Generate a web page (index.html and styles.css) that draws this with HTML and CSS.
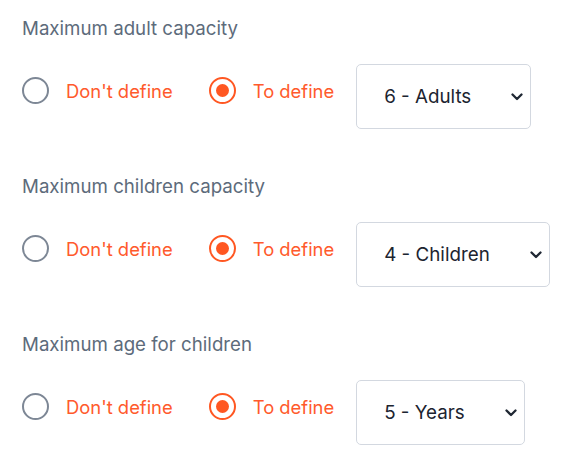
FILE: index.html
```html
<!DOCTYPE html>
<html>
<head>
<meta charset="utf-8">
<link rel="stylesheet" href="styles.css">
</head>
<body>
<div class="form">
  <div class="field">
    <div class="field-label">Maximum adult capacity</div>
    <div class="row">
      <label class="opt"><span class="radio"></span><span class="opt-text">Don't define</span></label>
      <label class="opt"><span class="radio checked"></span><span class="opt-text">To define</span></label>
      <div class="select"><span class="select-value">6 - Adults</span><svg class="chev" width="12" height="8" viewBox="0 0 12 8"><path d="M1.5 1.5 L6 6 L10.5 1.5" fill="none" stroke="#1f2733" stroke-width="2.3" stroke-linecap="round" stroke-linejoin="round"/></svg></div>
    </div>
  </div>
  <div class="field">
    <div class="field-label">Maximum children capacity</div>
    <div class="row">
      <label class="opt"><span class="radio"></span><span class="opt-text">Don't define</span></label>
      <label class="opt"><span class="radio checked"></span><span class="opt-text">To define</span></label>
      <div class="select"><span class="select-value">4 - Children</span><svg class="chev" width="12" height="8" viewBox="0 0 12 8"><path d="M1.5 1.5 L6 6 L10.5 1.5" fill="none" stroke="#1f2733" stroke-width="2.3" stroke-linecap="round" stroke-linejoin="round"/></svg></div>
    </div>
  </div>
  <div class="field">
    <div class="field-label">Maximum age for children</div>
    <div class="row">
      <label class="opt"><span class="radio"></span><span class="opt-text">Don't define</span></label>
      <label class="opt"><span class="radio checked"></span><span class="opt-text">To define</span></label>
      <div class="select"><span class="select-value">5 - Years</span><svg class="chev" width="12" height="8" viewBox="0 0 12 8"><path d="M1.5 1.5 L6 6 L10.5 1.5" fill="none" stroke="#1f2733" stroke-width="2.3" stroke-linecap="round" stroke-linejoin="round"/></svg></div>
    </div>
  </div>
</div>
</body>
</html>
```
FILE: styles.css
```css
html, body {
  margin: 0;
  padding: 0;
  background: #ffffff;
}
body {
  font-family: Inter, "Noto Sans", sans-serif;
}
.form {
  padding: 17px 0 0 22px;
  display: flex;
  flex-direction: column;
  gap: 46px;
}
.field-label {
  font-size: 18.7px;
  line-height: 24px;
  color: #5d6b7b;
  margin-bottom: 23px;
}
.row {
  display: flex;
  align-items: flex-start;
}
.opt {
  display: flex;
  align-items: center;
  gap: 17px;
  margin-top: 13px;
  margin-right: 36px;
}
.opt + .opt {
  margin-right: 22px;
}
.radio {
  box-sizing: border-box;
  width: 27px;
  height: 27px;
  border-radius: 50%;
  border: 2.5px solid #7d8795;
  display: flex;
  align-items: center;
  justify-content: center;
}
.radio.checked {
  border-color: #ff5722;
}
.radio.checked::after {
  content: "";
  width: 13px;
  height: 13px;
  border-radius: 50%;
  background: #ff5722;
}
.opt-text {
  font-size: 18.4px;
  line-height: 24px;
  color: #ff5a2c;
}
.select {
  box-sizing: border-box;
  height: 65px;
  border: 1px solid #d3d8e0;
  border-radius: 5px;
  display: flex;
  align-items: center;
  padding: 0 7px 0 27px;
  gap: 40px;
}
.select-value {
  font-size: 18.8px;
  color: #1c2430;
}
.chev {
  display: block;
}
```
